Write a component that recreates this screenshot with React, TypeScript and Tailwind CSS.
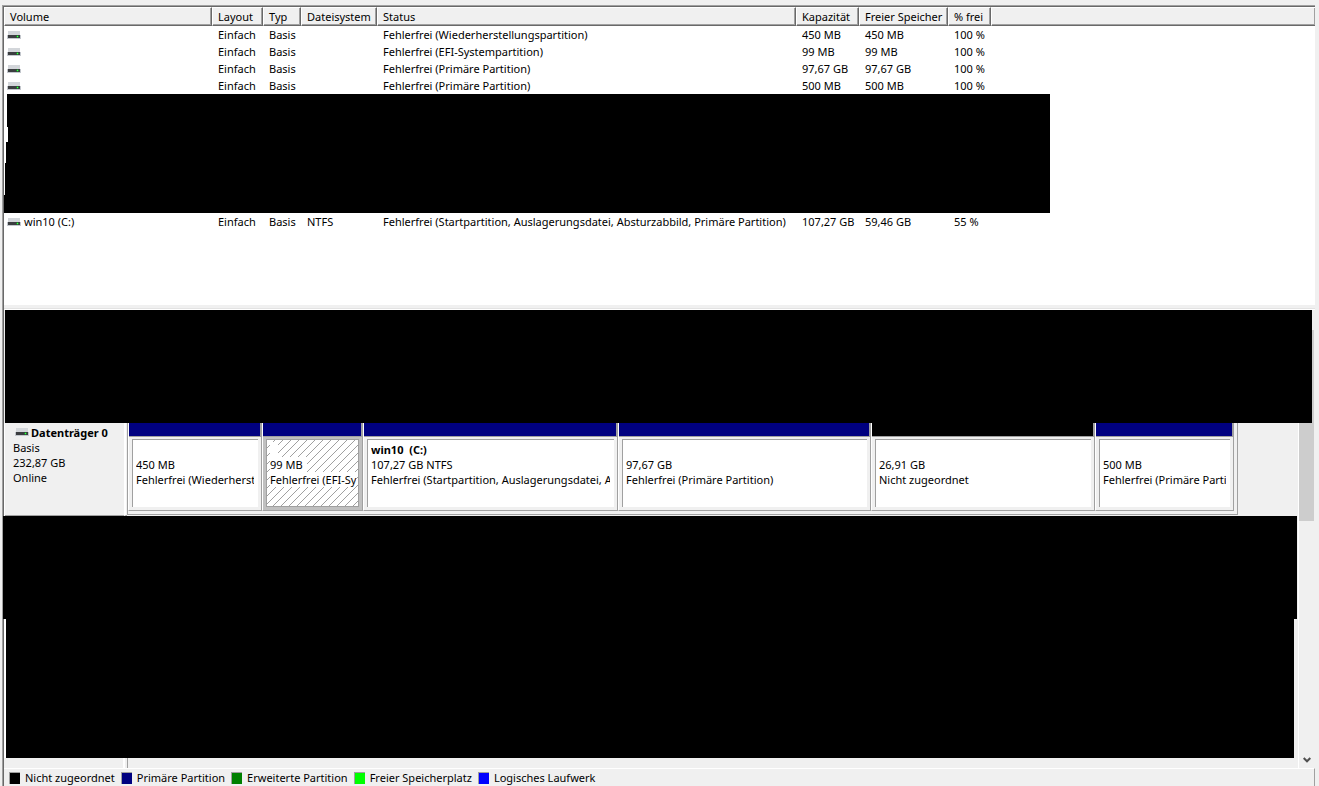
import React from "react";

type Volume = {
  name?: string;
  fs?: string;
  status: string;
  size: string;
  free: string;
  percent: string;
};

const headers = ["Volume", "Layout", "Typ", "Dateisystem", "Status", "Kapazität", "Freier Speicher", "% frei", ""];

const volumes: Volume[] = [
  { status: "Fehlerfrei (Wiederherstellungspartition)", size: "450 MB", free: "450 MB", percent: "100 %" },
  { status: "Fehlerfrei (EFI-Systempartition)", size: "99 MB", free: "99 MB", percent: "100 %" },
  { status: "Fehlerfrei (Primäre Partition)", size: "97,67 GB", free: "97,67 GB", percent: "100 %" },
  { status: "Fehlerfrei (Primäre Partition)", size: "500 MB", free: "500 MB", percent: "100 %" },
];

const systemVolume: Volume = {
  name: "win10 (C:)",
  fs: "NTFS",
  status: "Fehlerfrei (Startpartition, Auslagerungsdatei, Absturzabbild, Primäre Partition)",
  size: "107,27 GB",
  free: "59,46 GB",
  percent: "55 %",
};

const partitions = [
  { bar: "bg-[#000080]", name: "", size: "450 MB", status: "Fehlerfrei (Wiederherstellungspartition)" },
  { bar: "bg-[#000080]", name: "", size: "99 MB", status: "Fehlerfrei (EFI-Systempartition)", selected: true },
  { bar: "bg-[#000080]", name: "win10  (C:)", size: "107,27 GB NTFS", status: "Fehlerfrei (Startpartition, Auslagerungsdatei, Absturzabbild, Primäre Partition)" },
  { bar: "bg-[#000080]", name: "", size: "97,67 GB", status: "Fehlerfrei (Primäre Partition)" },
  { bar: "bg-black", name: "", size: "26,91 GB", status: "Nicht zugeordnet" },
  { bar: "bg-[#000080]", name: "", size: "500 MB", status: "Fehlerfrei (Primäre Partition)" },
];

const legend = [
  { color: "bg-black", label: "Nicht zugeordnet" },
  { color: "bg-[#000080]", label: "Primäre Partition" },
  { color: "bg-[#008000]", label: "Erweiterte Partition" },
  { color: "bg-[#00ff00]", label: "Freier Speicherplatz" },
  { color: "bg-[#0000ff]", label: "Logisches Laufwerk" },
];

function DriveIcon() {
  return (
    <svg width="14" height="8" viewBox="0 0 14 8" className="shrink-0" shapeRendering="crispEdges" aria-hidden="true">
      <path d="M1 0h12v4H1z" fill="#d3d6da" />
      <path d="M0 4h14v4H0z" fill="#c3c7cd" />
      <path d="M1 4h12v3H1z" fill="#3b3d40" />
      <path d="M10 4h1v3h-1zM9 5h3v1H9z" fill="#1f8a2c" />
      <path d="M10 5h1v1h-1z" fill="#3dff4a" />
    </svg>
  );
}

function VolumeRow({ v }: { v: Volume }) {
  return (
    <tr className="h-[17px] [&>td]:overflow-hidden [&>td]:p-0 [&>td]:pl-1.5 [&>td]:whitespace-nowrap">
      <td>
        <div className="-ml-[3px] flex items-center gap-[3px]">
          <DriveIcon />
          {v.name}
        </div>
      </td>
      <td>Einfach</td>
      <td>Basis</td>
      <td>{v.fs}</td>
      <td>{v.status}</td>
      <td>{v.size}</td>
      <td>{v.free}</td>
      <td>{v.percent}</td>
      <td />
    </tr>
  );
}

function VolumeTable() {
  return (
    <table className="w-full table-fixed border-separate border-spacing-0 leading-[17px]">
      <colgroup>
        <col className="w-[208px]" />
        <col className="w-[51px]" />
        <col className="w-[38px]" />
        <col className="w-[76px]" />
        <col className="w-[419px]" />
        <col className="w-[63px]" />
        <col className="w-[89px]" />
        <col className="w-[43px]" />
        <col />
      </colgroup>
      <thead>
        <tr className="h-[19px]">
          {headers.map((h, i) => (
            <th
              key={i}
              className="border-t border-r border-b border-l border-t-white border-r-[#696969] border-b-[#696969] border-l-white bg-[#f0f0f0] p-0 pl-[5px] text-left font-normal whitespace-nowrap shadow-[inset_-1px_-1px_0_#a0a0a0] last:border-r-0"
            >
              {h}
            </th>
          ))}
        </tr>
      </thead>
      <tbody>
        {volumes.map((v, i) => (
          <VolumeRow key={i} v={v} />
        ))}
        <tr>
          <td colSpan={9} className="p-0">
            <div className="flex w-[1046px] max-w-full flex-col [&>div]:bg-black">
              <div className="ml-[3px] h-[33px]" />
              <div className="ml-1 h-[15px]" />
              <div className="ml-[2px] h-[21px]" />
              <div className="ml-px h-8" />
              <div className="h-[18px]" />
            </div>
          </td>
        </tr>
        <VolumeRow v={systemVolume} />
      </tbody>
    </table>
  );
}

function Hatch() {
  return (
    <svg className="absolute inset-0 h-full w-full" aria-hidden="true">
      <defs>
        <pattern id="hatch" width="8" height="8" patternUnits="userSpaceOnUse">
          <path
            d="M7 0h1v1h-1zM6 1h1v1h-1zM5 2h1v1h-1zM4 3h1v1h-1zM3 4h1v1h-1zM2 5h1v1h-1zM1 6h1v1h-1zM0 7h1v1h-1z"
            fill="#a0a0a0"
            shapeRendering="crispEdges"
          />
        </pattern>
      </defs>
      <rect width="100%" height="100%" fill="url(#hatch)" />
    </svg>
  );
}

function DiskRow() {
  return (
    <section className="flex h-[93px] border-l border-white">
      <div className="w-[119px] shrink-0 border-b border-[#a0a0a0] pt-[2px] pl-2 leading-[15px]">
        <h2 className="flex gap-[2px] pl-[2px] font-bold whitespace-nowrap">
          <span className="pt-[3px]">
            <DriveIcon />
          </span>
          Datenträger 0
        </h2>
        <p>Basis</p>
        <p>232,87 GB</p>
        <p>Online</p>
      </div>
      <div className="w-[3px] shrink-0 border-b border-l-2 border-b-[#a0a0a0] border-l-white" />
      <div className="mr-[60px] mb-px grid min-w-0 flex-1 grid-cols-[134fr_101fr_255fr_253fr_224fr_139fr] border-r border-b border-l border-[#a0a0a0] pr-[3px] pb-[3px]">
        {partitions.map((p, i) => (
          <article
            key={i}
            className={`flex min-w-0 flex-col border-r border-b border-l border-r-[#a0a0a0] border-b-[#a0a0a0] border-l-white ${p.selected ? "bg-[#c0c0c0]" : "bg-[#f0f0f0]"}`}
          >
            <div className="h-[14px] shrink-0 border-b border-[#a0a0a0] bg-[#a0a0a0] pr-px">
              <div className={`h-[13px] ${p.bar}`} />
            </div>
            <div className="min-h-0 flex-1 px-[3px] pt-[2px] pb-[3px]">
              <div
                className={`relative h-full overflow-hidden bg-white pt-[2px] pl-[3px] leading-[15px] whitespace-pre ${p.selected ? "border border-[#a0a0a0] pr-[2px]" : "border-t border-l border-[#a0a0a0] pr-1"}`}
              >
                {p.selected && <Hatch />}
                <div className="relative overflow-hidden">
                  <h3 className="h-[15px] w-fit min-w-2 bg-white font-bold">{p.name}</h3>
                  <p className="w-fit bg-white pr-1">{p.size}</p>
                  <p className="overflow-hidden bg-white">{p.status}</p>
                </div>
              </div>
            </div>
          </article>
        ))}
      </div>
    </section>
  );
}

export default function App() {
  return (
    <main className="flex min-h-screen flex-col bg-[#f0f0f0] pt-[5px] pr-1 pl-[2px] font-['Noto_Sans','Open_Sans',sans-serif] text-[11px] text-black">
      <div className="flex flex-1 flex-col border-t border-l border-[#a0a0a0]">
        <div className="flex flex-1 flex-col border-t border-l border-[#696969]">
          <section className="flex-1 bg-white">
            <VolumeTable />
          </section>
          <div className="h-[5px] border-b border-white">
            <div className="mt-[3px] h-px bg-[#e3e3e3]" />
          </div>
          <div className="flex h-[113px] pl-px">
            <div className="flex-1 bg-black" />
            <div className="mr-px w-[2px] border-t-[20px] border-[#f0f0f0] bg-[#cdcdcd]" />
          </div>
          <div className="flex pr-px">
            <div className="min-w-0 flex-1">
              <DiskRow />
              <div className="mr-px -ml-px h-[103px] bg-black" />
              <div className="mr-1 h-[139px] border-l-2 border-white bg-black" />
              <div className="flex h-[10px]">
                <div className="w-[121px] border-r-2 border-white" />
                <div className="ml-[2px] border-l border-[#a0a0a0]" />
              </div>
            </div>
            <div className="flex w-4 flex-col items-center justify-between border-l border-white">
              <div className="h-[98px] w-full bg-[#cdcdcd]" />
              <button type="button" aria-label="Nach unten" className="flex h-[17px] w-full items-center justify-center">
                <svg width="8" height="6" viewBox="0 0 8 6" aria-hidden="true">
                  <path d="M0.700 1l3.300 3.300L7.300 1" fill="none" stroke="#505050" strokeWidth="2" />
                </svg>
              </button>
            </div>
          </div>
          <ul className="flex h-[18px] gap-[6px] border-t border-r border-t-white border-r-[#a0a0a0] pl-[5px] leading-[17px] whitespace-nowrap">
            {legend.map((l) => (
              <li key={l.label} className="flex items-center gap-[5px]">
                <span className={`h-3 w-[11px] border-t border-l border-[#a0a0a0] ${l.color}`} />
                {l.label}
              </li>
            ))}
          </ul>
        </div>
      </div>
    </main>
  );
}
